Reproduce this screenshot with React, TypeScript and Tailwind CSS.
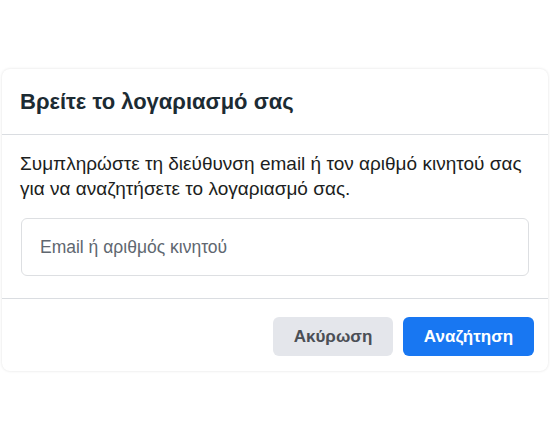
import React from 'react';

export default function App() {
  return (
    <div className="w-[550px] h-[430px] bg-white pt-[69px] px-[2px]" style={{ fontFamily: '"Liberation Sans", Arial, sans-serif' }}>
      <div className="w-[546px] rounded-lg bg-white shadow-[0_0_3px_rgba(0,0,0,0.12)]">
        <div className="h-[66px] flex items-center px-[18px] border-b border-[#dadde1]">
          <h2 className="text-[22px] font-bold text-[#1c2b33]">Βρείτε το λογαριασμό σας</h2>
        </div>
        <div className="px-[18px] pt-[16px] pb-[22px] border-b border-[#dadde1]">
          <p className="text-[19px] leading-[25px] text-[#1c1e21]">
            Συμπληρώστε τη διεύθυνση email ή τον αριθμό κινητού σας για να αναζητήσετε το λογαριασμό σας.
          </p>
          <input
            type="text"
            placeholder="Email ή αριθμός κινητού"
            className="mt-[17px] w-[508px] h-[58px] ml-px rounded-md border border-[#dddfe2] px-[18px] text-[17.5px] text-[#1c1e21] placeholder:text-[#606770] outline-none"
          />
        </div>
        <div className="flex justify-end gap-[10px] px-[14px] pt-[18px] pb-[15px]">
          <button className="w-[120px] h-[39px] rounded-md bg-[#e4e6eb] text-[17px] font-bold text-[#4b4f56]">Ακύρωση</button>
          <button className="w-[131px] h-[39px] rounded-md bg-[#1877f2] text-[17px] font-bold text-white">Αναζήτηση</button>
        </div>
      </div>
    </div>
  );
}
